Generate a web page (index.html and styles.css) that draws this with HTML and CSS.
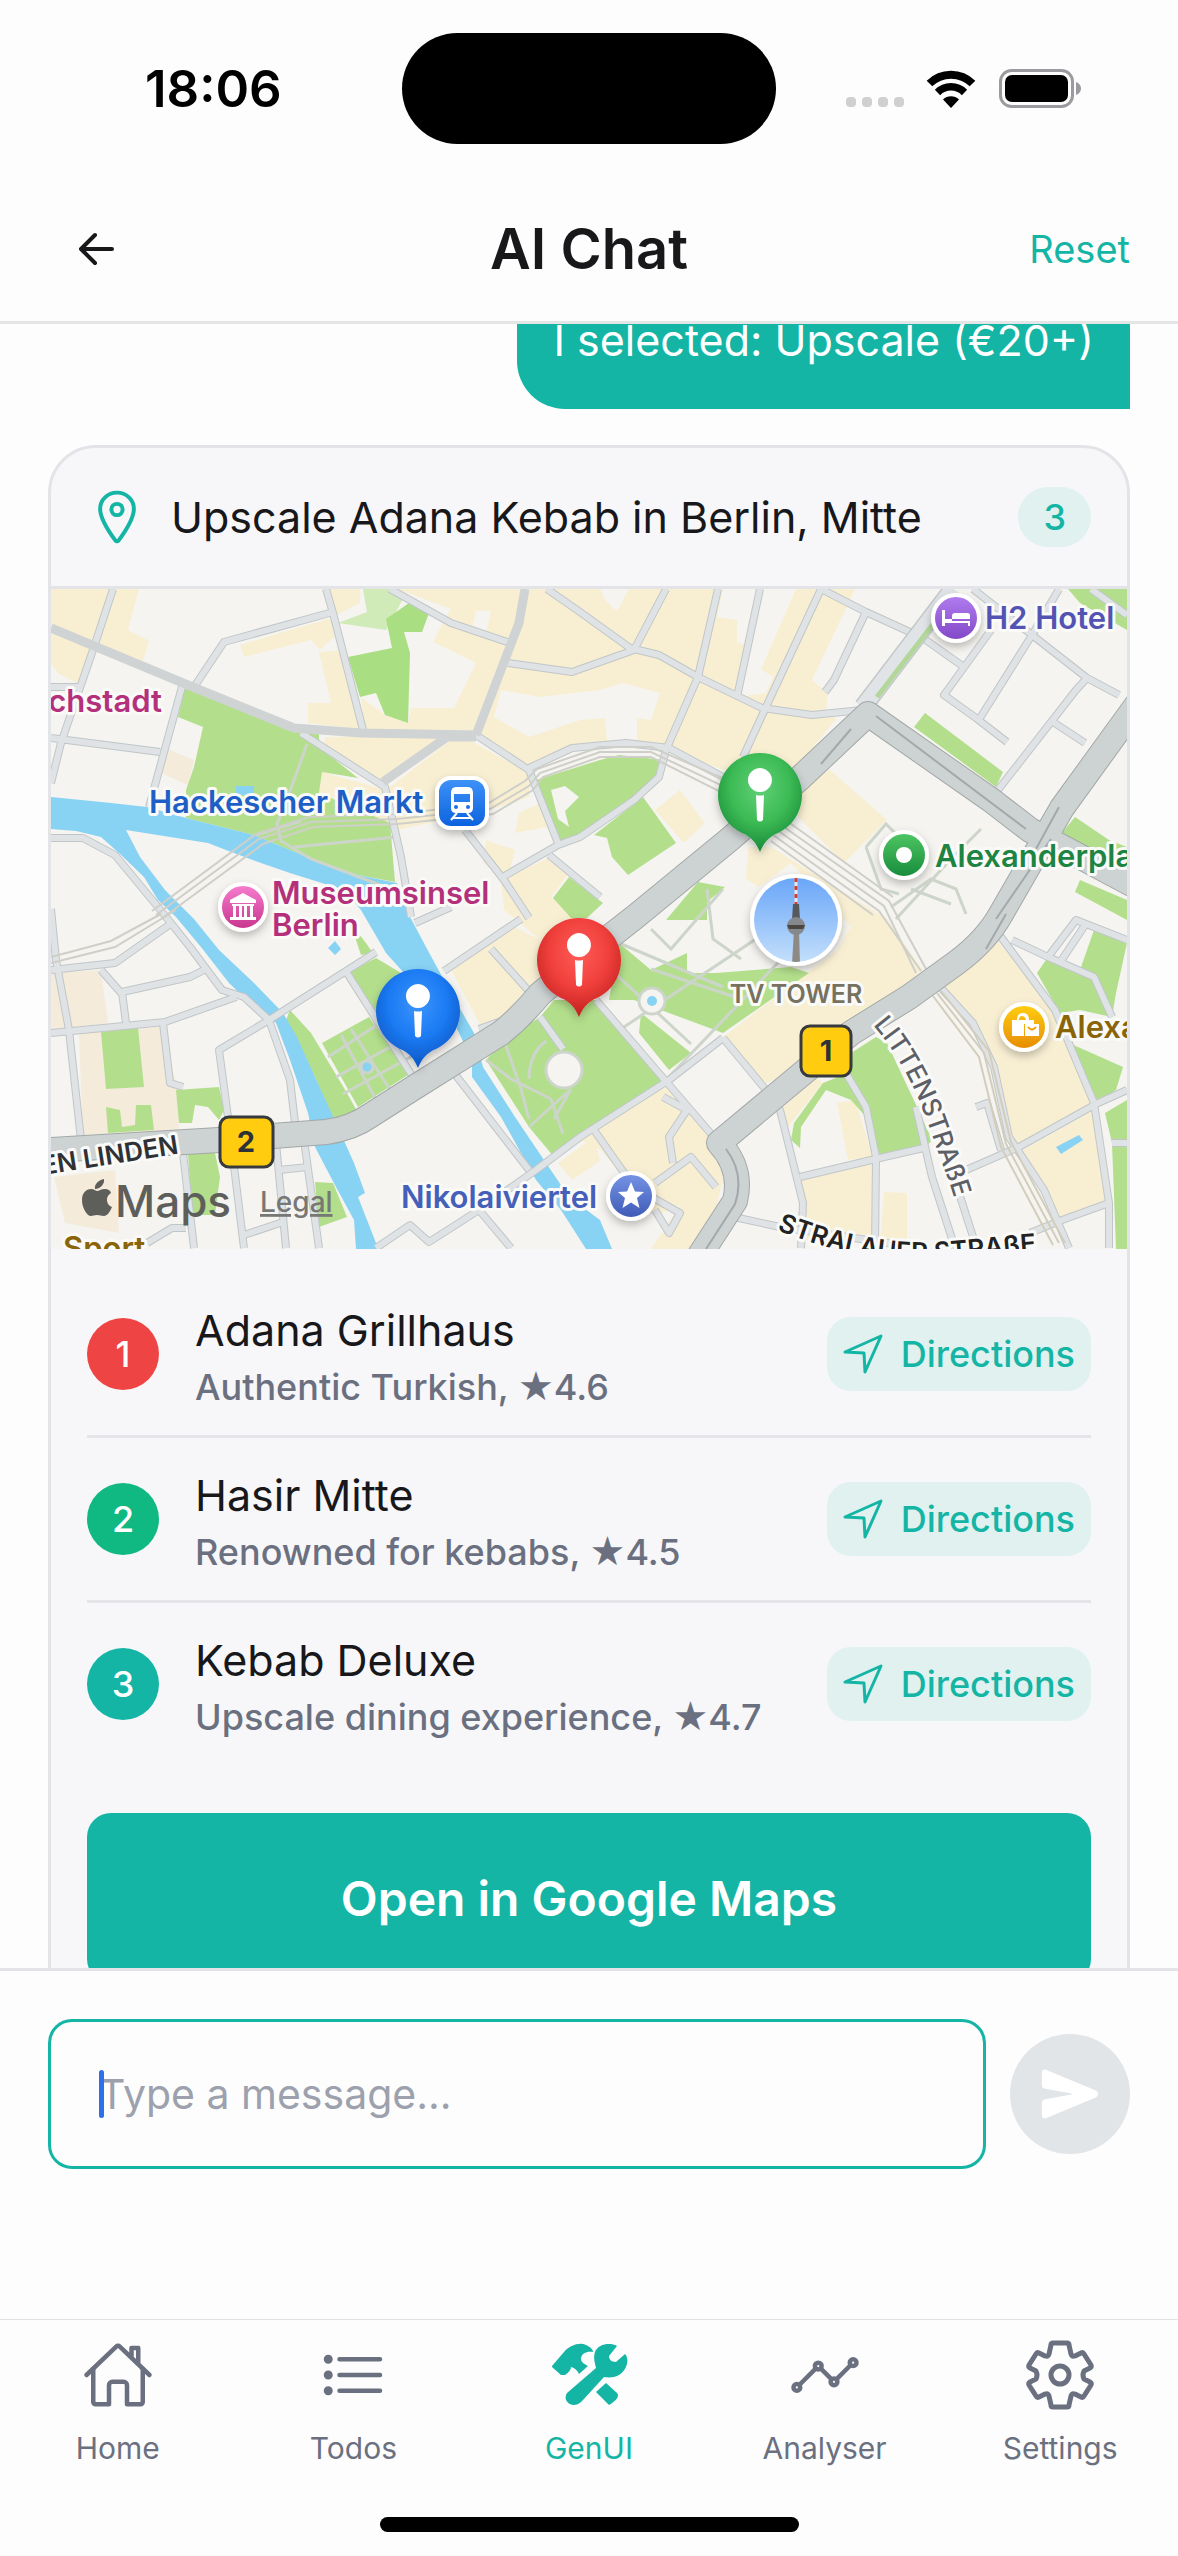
FILE: index.html
```html
<!DOCTYPE html>
<html lang="en">
<head>
    <meta charset="UTF-8">
    <meta name="viewport" content="width=device-width, initial-scale=1.0">
    <title>AI Chat</title>
    <link rel="stylesheet" href="styles.css">
</head>
<body>
    <div class="status-bar">
        <div class="status-side"><span class="time">18:06</span></div>
        <div class="island"></div>
        <div class="status-side status-right">
            <div class="signal"><i></i><i></i><i></i><i></i></div>
            <svg class="wifi" viewBox="0 0 50 38" fill="none" stroke="#000">
                <path d="M3.500 13.500A30.500 30.500 0 0 1 46.500 13.500" stroke-width="8"/>
                <path d="M11.500 22.500A19 19 0 0 1 38.500 22.500" stroke-width="7.500"/>
                <path d="M25 38L17 29.500A11.500 11.500 0 0 1 33 29.500Z" fill="#000" stroke="none"/>
            </svg>
            <svg class="battery" viewBox="0 0 82 40">
                <rect x="1.500" y="1.500" width="72" height="36" rx="11" fill="none" stroke="#9b9b9f" stroke-width="3"/>
                <rect x="6" y="6" width="63" height="27" rx="7"/>
                <path d="M77 13c3 1 5 3.500 5 6.500s-2 5.500-5 6.500z" fill="#9b9b9f"/>
            </svg>
        </div>
    </div>

    <header class="header">
        <button class="back" aria-label="Back">
            <svg viewBox="0 0 38 36" fill="none" stroke="#18181b" stroke-width="4" stroke-linecap="round" stroke-linejoin="round">
                <path d="M34 18H3M17 4L3 18L17 32"/>
            </svg>
        </button>
        <h1>AI Chat</h1>
        <button class="reset">Reset</button>
    </header>

    <main class="chat">
        <div class="messages">
            <p class="bubble">I selected: Upscale (€20+)</p>

            <section class="card">
                <div class="card-header">
                    <svg class="pin-icon" viewBox="0 0 512 512" fill="none" stroke="#14b5a5" stroke-width="34" stroke-linejoin="round">
                        <path d="M256 48c-79.500 0-144 61.390-144 137 0 87 96 224.870 131.250 272.490a15.770 15.770 0 0025.500 0C304 409.890 400 272.070 400 185c0-75.610-64.500-137-144-137z"/>
                        <circle cx="256" cy="192" r="48"/>
                    </svg>
                    <h2>Upscale Adana Kebab in Berlin, Mitte</h2>
                    <span class="count">3</span>
                </div>

                <svg class="map" viewBox="0 0 1076 660" preserveAspectRatio="xMidYMid slice">
                    <defs>
                        <linearGradient id="g-blue" x2="0" y2="1"><stop stop-color="#3f93f8"/><stop offset="1" stop-color="#0b61dd"/></linearGradient>
                        <linearGradient id="g-pink" x2="0" y2="1"><stop stop-color="#f77fd0"/><stop offset="1" stop-color="#c7338c"/></linearGradient>
                        <linearGradient id="g-purple" x2="0" y2="1"><stop stop-color="#b27df0"/><stop offset="1" stop-color="#8047c6"/></linearGradient>
                        <linearGradient id="g-green" x2="0" y2="1"><stop stop-color="#4fc763"/><stop offset="1" stop-color="#168a3c"/></linearGradient>
                        <linearGradient id="g-yellow" x2="0" y2="1"><stop stop-color="#ffcf0d"/><stop offset="1" stop-color="#e68a05"/></linearGradient>
                        <linearGradient id="g-indigo" x2="0" y2="1"><stop stop-color="#7795e6"/><stop offset="1" stop-color="#3d59b5"/></linearGradient>
                        <linearGradient id="g-sky" x2="0" y2="1"><stop stop-color="#6aa6f8"/><stop offset="1" stop-color="#c3dffb"/></linearGradient>
                        <radialGradient id="pin-green" cy=".35" r=".7"><stop stop-color="#62d077"/><stop offset=".5" stop-color="#3cbb55"/><stop offset="1" stop-color="#128034"/></radialGradient>
                        <radialGradient id="pin-red" cy=".35" r=".7"><stop stop-color="#ff5c58"/><stop offset=".5" stop-color="#f0403c"/><stop offset="1" stop-color="#b81a1a"/></radialGradient>
                        <radialGradient id="pin-blue" cy=".35" r=".7"><stop stop-color="#3c94fc"/><stop offset=".5" stop-color="#1b7af3"/><stop offset="1" stop-color="#0a4fb8"/></radialGradient>
                        <filter id="soft" x="-50%" y="-50%" width="200%" height="200%"><feDropShadow dx="0" dy="4" stdDeviation="4" flood-opacity=".25"/></filter>
                        <clipPath id="tower-clip"><circle r="42"/></clipPath>
                        <path id="litten" d="M822 436C850 468 870 510 884 555C894 583 902 600 907 625"/>
                        <path id="stralauer" d="M726 641C770 659 830 674 880 672S970 662 1020 662"/>
                        <path id="pin-shape" d="M0 0C-4-9-8-15-18-19A42 42 0 1 1 18-19C8-15 4-9 0 0Z"/>
                        <path id="pin-mark" d="M0-84a12 12 0 1 1-.1 0ZM-4-57Q0-56 4-57L3-32Q0-29-3-32Z"/>
                        <g id="street-lines">
                            <path d="M62 0L43 58L10 154L0 194M275 0L282 24L312 141M282 23L173 53L143 98M132 94L98 218M0 149L109 163M0 98H28M339 0L400 34L459 54"/>
                            <path d="M457 74L521 83L583 61L615 0M496 0L529 23L579 59L608 66L647 88L711 119L761 126L811 121M425 146L478 181L507 254M478 179L521 159L575 154L618 159L672 188"/>
                            <path d="M250 144L334 198L350 268L360 328M414 241L453 291L478 329M450 289L507 256L529 248L583 211L608 188L615 161L647 88L667 0M498 266L549 308M709 0L686 108M770 0L715 118L692 168"/>
                            <path d="M772 1L815 23L861 44M815 23L783 91L774 103M872 49L913 78M940 41L893 106L925 129L956 153M922 0L981 46L1036 89L1068 106M981 46L929 129M1008 0L981 46M1036 89L1025 101L947 201M1002 133L1034 154M1040 0L1076 26"/>
                            <path d="M0 381L64 374L118 336M0 444L114 433L185 408M0 320L5 371L18 441L30 551M71 403L139 388L153 381M71 403L75 434M50 381L71 405M112 434L119 494L132 498"/>
                            <path d="M0 249H32L64 266L107 318L139 358L171 401L193 408L218 431M325 363L218 431L168 461L177 528L193 659M296 384L364 491M218 431L239 491L244 534M225 554L235 659M253 551L268 659M228 581L257 578M132 564L143 659M193 646L232 633M96 654L121 639H135"/>
                            <path d="M325 659L359 636L378 653L428 621L485 581L529 548L618 491L672 449M428 621L460 659M403 484L478 581M545 411L668 554M489 428L512 460M672 449L715 501L729 521L752 614L750 659M793 481L815 518L825 568L824 659M749 588L833 568L877 558M865 518L881 588L904 659"/>
                            <path d="M915 581L968 558L1047 514L1076 501M925 518L936 514L950 561M890 399L922 434L943 478L958 548L993 601L1018 659M947 344L1004 421L1043 514L1058 614V659M1058 614L1011 631L979 644M961 351L997 368L1025 331L1076 351M997 368L1043 388L1061 428M1010 372L1034 336M683 628L729 638L850 656M908 604L924 654"/>
                            <path d="M543 541L583 598L629 624L618 644L604 621M604 594L640 568L665 598M636 521L618 548L622 574M612 508L636 521M1061 554H1076M364 334L400 318M393 382L470 330M440 360L485 410M428 440L470 425"/>
                        </g>
                        <g id="main-roads">
                            <path d="M0 561L168 551L275 543Q300 540 320 526L364 498L450 444Q470 428 489 405L543 360L584 328L679 250L748 190L817 125L940 211L979 241L1090 300"/>
                            <path d="M1090 110L1011 219L950 325Q935 352 905 374L858 408L800 444L668 554Q692 580 684 612L640 680"/>
                        </g>
                    </defs>

                    <rect width="1076" height="660" fill="#f5f4f0"/>

                    <!-- built-up areas -->
                    <g fill="#f8efd3">
                        <path d="M0 0H88L77 41L98 52L92 72L43 54L28 95L8 85L0 75Z"/>
                        <path d="M189 56L280 29L285 46L269 61L260 51L193 68Z"/>
                        <path d="M268 63L292 61L312 141L257 134V114H280Z"/>
                        <path d="M278 0H309V14L286 26Z"/>
                        <path d="M310 108L334 126L357 134L360 119H403L425 74L382 53L392 34L400 20L346 0H471L459 54L425 144L314 141Z"/>
                        <path d="M478 0H804L793 24L761 91L777 104L775 121L785 130L743 182L672 181L614 158L529 154L478 178L425 148L457 74Z"/>
                        <path d="M275 148L396 146L332 198L271 158Z"/>
                        <path d="M335 201L400 151H418L478 184V208L439 221L346 241L268 204L271 183Z"/>
                        <path d="M468 224L489 214L496 238L464 244Z"/>
                        <path d="M435 251L464 261L460 278L450 288L432 274Z"/>
                        <path d="M450 291L500 268L518 284L500 308L530 334L500 360L453 321Z"/>
                        <path d="M400 381L464 338L489 351L493 394L432 441Z"/>
                        <path d="M750 194L779 181L836 231L793 274L743 224Z"/>
                        <path d="M697 258H720L836 330L872 381L750 481L715 494L672 448L786 361L800 338L740 274L708 298L695 290Z"/>
                        <path d="M629 201L654 234L633 254L604 221Z"/>
                        <path d="M943 348L1011 424L1047 518L965 558L933 454L890 401Z"/>
                        <path d="M972 561L1043 521L1058 614L1008 634Z"/>
                        <path d="M750 588L825 571L822 651H754ZM833 603L856 604V651H829Z"/>
                        <path d="M786 514L804 511L822 568L797 571Z"/>
                        <path d="M729 521L765 488L772 494L735 540Z"/>
                        <path d="M529 551L611 494L658 548L672 588L665 598L604 628L550 561Z"/>
                        <path d="M507 574L543 548L549 572L521 591ZM640 600L672 590L660 640L640 660H600Z"/>
                    </g>
                    <g fill="#f5f4f0">
                        <path d="M450 101L489 108L549 101L572 94L609 104L600 131L586 129V151H556L554 129L529 131L478 148L443 128Z"/>
                        <path d="M672 0H706L700 56L686 54V31L666 28Z"/>
                        <path d="M712 0H745L710 80L722 88L715 104L687 108Z"/>
                        <path d="M800 338L715 300L700 340L760 380Z" fill="#f6f3ea"/>
                        <path d="M549 0H578L566 22L555 12Z"/>
                        <path d="M425 22H440L436 40L420 44Z"/>
                    </g>
                    <g fill="#f4ebdb">
                        <path d="M28 444L110 438L127 501L128 544L32 551Z"/>
                        <path d="M0 384L50 381L57 434L0 441ZM3 588L64 581L68 644L14 634ZM112 158L143 171L137 196L110 184Z"/>
                    </g>

                    <!-- parks -->
                    <g fill="#b3df8c">
                        <path d="M134 98L239 138L268 144V158L307 189L271 183L268 204L339 234L344 293L307 286L246 264L203 246L135 229V201L143 178L152 138L127 128Z"/>
                        <path d="M312 0H337L353 8L335 41L287 34L316 23Z" fill="#d0eab8"/>
                        <path d="M358 14L378 24L371 43H353L359 64L357 134L334 126L325 104L309 108L297 68L341 59L335 30Z" fill="#a9df82"/>
                        <path d="M485 191L549 171L568 166L613 171L608 188L583 208L550 233L510 254Z"/>
                        <path d="M592 208L625 254L577 286L561 268L556 249L543 246Z"/>
                        <path d="M647 293L674 298L656 313V331H615Z"/>
                        <path d="M518 288L552 314L536 329H520L502 309Z"/>
                        <path d="M874 124L952 183L945 198L863 138ZM1024 228L1058 251L1076 258V274L1009 246ZM1029 291L1076 311V331L1024 303ZM1017 0H1076V41L1029 14Z"/>
                        <path d="M50 443L87 439L93 498L55 500ZM55 518L69 521L71 538L84 536L85 516H100L103 541L57 544Z"/>
                        <path d="M125 501L168 498L173 521L168 531L157 518L144 516L141 534H128ZM137 564H164L169 588L164 626H141Z"/>
                        <path d="M264 593L282 594L296 628L268 638Z"/>
                        <path d="M239 421L260 444L296 504L307 524L282 531L264 488L235 431Z"/>
                        <path d="M271 454L318 428L346 468L360 484L307 518Z"/>
                        <path d="M298 383L325 369L350 384L335 428L322 425Z"/>
                        <path d="M300 336L312 350L322 364L310 366Z"/>
                        <path d="M453 451L489 428L503 411H550L615 491L529 544L503 568L478 538L435 471Z"/>
                        <path d="M568 354L600 381L636 364V384L665 384L740 378L758 384L672 444L618 424L583 411H558Z"/>
                        <path d="M590 424L640 464L618 481L588 444Z"/>
                        <path d="M825 448L836 454L866 518L881 551L875 558L829 566L815 528L800 511L775 501L750 538L749 559L740 551L743 534L772 494L797 484L800 464Z"/>
                        <path d="M1043 341L1076 354L1065 404L1061 428L1029 421L1009 424L986 384L997 368L1029 381Z"/>
                        <path d="M1018 454L1072 478L1065 501L1047 513ZM1054 524L1076 511V660H1065L1061 554Z"/>
                    </g>
                    <path d="M500 201L514 197L528 208L514 222L518 238L507 230Z" fill="#f5f4f0"/>

                    <!-- water -->
                    <g fill="#88d2f3">
                        <path d="M0 208L60 214L96 218L135 229L203 246L246 264L307 286L346 294L357 324L375 358L400 404L423 444L432 478L464 528L493 571L518 608L549 631L561 660H535L510 621L485 591L450 528L421 488V474L410 448L393 414L375 398L353 384L335 364L310 321L293 301L239 284L210 274L175 261L157 254L75 241L89 268L114 301L143 330L168 361L203 394L232 424L246 448L264 488L285 534L303 574L314 604L307 608L325 654L330 660H305L303 631L285 598L264 558L257 524L239 471L225 434L203 418L178 394L150 358L125 328L107 311L93 288L68 264L50 248L25 242L0 240Z"/>
                        <path d="M185 197H203V206H185ZM277 359L284 352L290 360L284 366ZM1005 558L1028 546L1032 551L1010 565Z"/>
                    </g>

                    <!-- park paths -->
                    <g fill="none" stroke="#cdd5cb" stroke-width="3">
                        <path d="M256 155L238 205L226 235L230 252L260 270L340 300"/>
                        <path d="M243 258L346 248M205 246L250 232M435 471L460 490L500 510L512 545M478 538L520 500L503 530M489 428L512 455M478 490Q478 465 495 452M453 451L470 500L478 530"/>
                        <path d="M285 488L350 452M277 468L335 430M292 505L365 465M300 440L345 510M290 446L330 520"/>
                        <path d="M555 376L640 455M568 354L672 398M570 440L735 330M600 380L690 410M615 491L740 360M600 340L620 360L672 300M656 300L662 350L690 370"/>
                        <circle cx="601" cy="412" r="13" fill="#f5f4f0"/><circle cx="316" cy="478" r="6" fill="#88d2f3"/>
                        <circle cx="513" cy="481" r="18" fill="#f5f4f0"/>
                        <path d="M840 318L880 290L905 300L915 325M845 330L900 270L930 240M860 300L900 315M815 258L835 235L850 250M815 258L830 300L848 305"/>
                    </g>
                    <circle cx="601" cy="412" r="5" fill="#88d2f3"/>

                    <!-- streets: casing first, surface on top -->
                    <use href="#street-lines" class="road street-casing"/>
                    <use href="#street-lines" class="road street-top"/>
                    <g fill="none" stroke="#cfd3d4" stroke-width="9">
                        <path d="M0 39L132 94L243 139L310 144L425 146M474 0L468 34L425 146M332 193L396 148H425"/>
                        <path d="M902 0L812 118" stroke="#c3c8ca" stroke-width="19"/>
                        <path d="M902 0L812 118" stroke="#e0e4e6" stroke-width="16"/>
                        <path d="M886 30L826 108" stroke="#b3d79a" stroke-width="5"/>
                    </g>

                    <!-- railway -->
                    <g fill="none" stroke="#cfcfc9" stroke-width="2">
                        <path d="M105 326L208 250L260 233L346 230L439 220L478 197L489 184L549 163L600 163L672 197L729 243L833 317L865 384"/>
                        <path d="M110 330L212 255L262 238L346 235L442 225L482 201L492 188L549 168L600 168L670 203L725 248L828 322L870 382"/>
                        <path d="M101 322L205 245L258 228L346 225L436 215L474 192L486 180L549 158L600 158L676 191L733 238L838 312L875 380"/>
                        <path d="M736 232L842 308M720 252L822 326M0 374L64 358L125 321M0 368L60 352L110 325"/>
                        <path d="M886 404L933 464L955 555L1008 654M890 402L938 462L960 553L1014 654M882 407L928 468L950 558L1002 656" stroke="#d3cdbb"/>
                    </g>

                    <!-- main roads -->
                    <use href="#main-roads" class="road main-casing"/>
                    <use href="#main-roads" class="road main-top"/>
                    <path d="M825 127L975 240M800 140L770 175M1008 218L985 260M955 325L935 360M675 560Q694 585 684 615L655 660M1000 250L945 330" fill="none" stroke="#a3a8a8" stroke-width="2"/>

                    <!-- places -->
                    <g class="place">
                        <text x="111" y="123" text-anchor="end" fill="#b4307b">chstadt</text>
                        <text x="98" y="224" fill="#1d5fc6">Hackescher Markt</text>
                        <text x="221" y="315" fill="#b4307b">Museumsinsel</text>
                        <text x="221" y="347" fill="#b4307b">Berlin</text>
                        <text x="934" y="40" fill="#5353b3">H2 Hotel</text>
                        <text x="884" y="278" fill="#1d8443">Alexanderplatz</text>
                        <text x="1004" y="449" fill="#8a6508">Alexa</text>
                        <text x="350" y="619" fill="#4560b8">Nikolaiviertel</text>
                        <text x="12" y="670" fill="#8a6508">Sport</text>
                        <text class="landmark" x="745" y="414" text-anchor="middle" fill="#76725f">TV TOWER</text>
                        <text class="street-name" transform="translate(-8 586) rotate(-9)" fill="#2e3236">EN LINDEN</text>
                        <text class="street-name thin" fill="#5c6066"><textPath href="#litten">LITTENSTRAßE</textPath></text>
                        <text class="street-name" fill="#222"><textPath href="#stralauer">STRALAUER STRAßE</textPath></text>
                    </g>

                    <g stroke="#fff" stroke-width="4" filter="url(#soft)">
                        <rect x="386" y="189" width="50" height="50" rx="14" fill="url(#g-blue)"/>
                        <circle cx="192" cy="318" r="23" fill="url(#g-pink)"/>
                        <circle cx="905" cy="29" r="23" fill="url(#g-purple)"/>
                        <circle cx="853" cy="266" r="23" fill="url(#g-green)"/>
                        <circle cx="973" cy="438" r="23" fill="url(#g-yellow)"/>
                        <circle cx="580" cy="607" r="23" fill="url(#g-indigo)"/>
                    </g>
                    <g fill="#fff">
                        <!-- train -->
                        <path d="M405 198h12q5 0 5 6v15q0 5-5 5h-12q-5 0-5-5v-15q0-6 5-6zM403 205v8h16v-8z" fill-rule="evenodd"/>
                        <path d="M406 224L400 231M416 224L422 231M402 229H420" stroke="#fff" stroke-width="2"/>
                        <circle cx="405" cy="218" r="2" fill="#1b6fe5"/><circle cx="417" cy="218" r="2" fill="#1b6fe5"/>
                        <!-- museum -->
                        <path d="M192 304L205 311V314H179V311ZM181 315H203V317H181ZM182 317h3v11h-3zM188 317h3v11h-3zM193 317h3v11h-3zM199 317h3v11h-3zM179 328H205V331H179Z"/>
                        <!-- bed -->
                        <path d="M891 21h3v9h25v-4q0-2-3-2h-12q-3 0-3 3v5h18v5h-2v-3h-23v3h-3z"/>
                        <circle cx="853" cy="266" r="8"/>
                        <!-- shopping bags -->
                        <path d="M961 431h5q0-7 6-7t6 7h5v4h-10v12h-12zM968 431h7q-1-4-4-4t-3 4zM974 435h14v12h-14z" fill-rule="evenodd"/>
                        <path d="M977 438q4 5 8 0" fill="none" stroke="#f2a008" stroke-width="2"/>
                        <path d="M580 593L584 602.500L593 603L586 609L588.500 619L580 613.500L571.500 619L574 609L567 603L576 602.500Z"/>
                    </g>

                    <g transform="translate(745 331)">
                        <circle r="46" fill="#fff" filter="url(#soft)"/>
                        <circle r="42" fill="url(#g-sky)"/>
                        <g clip-path="url(#tower-clip)">
                            <path d="M0-42V-14" stroke="#e8e8e8" stroke-width="3"/>
                            <path d="M0-42V-14" stroke="#d63a32" stroke-width="3" stroke-dasharray="4 4"/>
                            <path d="M-3-16H3L4 0H-4Z" fill="#55585c"/>
                            <path d="M-2 10H3L4 44H-4Z" fill="#8d8a85"/>
                            <circle cy="6" r="9" fill="#85888c"/>
                            <path d="M-9 5H9L7 9H-7Z" fill="#4a4743"/>
                        </g>
                    </g>

                    <g fill="#ffcc10" stroke="#37393d" stroke-width="3">
                        <rect x="169" y="528" width="53" height="50" rx="9"/>
                        <rect x="750" y="437" width="50" height="50" rx="9"/>
                    </g>
                    <g class="route">
                        <text x="195" y="563">2</text>
                        <text x="775" y="472">1</text>
                    </g>

                    <!-- result pins -->
                    <g filter="url(#soft)">
                        <use href="#pin-shape" x="709" y="263" fill="url(#pin-green)"/>
                        <use href="#pin-shape" x="528" y="428" fill="url(#pin-red)"/>
                        <use href="#pin-shape" x="367" y="479" fill="url(#pin-blue)"/>
                    </g>
                    <g fill="#fff">
                        <use href="#pin-mark" x="709" y="263"/>
                        <use href="#pin-mark" x="528" y="428"/>
                        <use href="#pin-mark" x="367" y="479"/>
                    </g>

                    <g fill="#5e5e5b">
                        <path d="M53 590c1 5-4 10-9 10c-1-5 4-9 9-10zM46 602c2 0 4-2 8-2c3 0 5 1 6 4c-6 3-5 12 1 14c-2 5-5 9-8 9c-3 0-4-1-7-1s-4 1-6 1c-4 0-9-8-9-16c0-7 4-11 9-11c3 0 5 2 6 2z"/>
                        <text class="brand" x="64" y="628">Maps</text>
                        <a href="#legal"><text class="legal" x="209" y="623">Legal</text></a>
                    </g>
                </svg>

                <ul class="places">
                    <li>
                        <span class="rank red">1</span>
                        <div class="info">
                            <h3>Adana Grillhaus</h3>
                            <p>Authentic Turkish, <span class="star">★</span>4.6</p>
                        </div>
                        <button class="directions">
                            <svg viewBox="0 0 40 40"><path d="M2 18L38 2L22 38L21 19Z"/></svg>
                            Directions
                        </button>
                    </li>
                    <li>
                        <span class="rank green">2</span>
                        <div class="info">
                            <h3>Hasir Mitte</h3>
                            <p>Renowned for kebabs, <span class="star">★</span>4.5</p>
                        </div>
                        <button class="directions">
                            <svg viewBox="0 0 40 40"><path d="M2 18L38 2L22 38L21 19Z"/></svg>
                            Directions
                        </button>
                    </li>
                    <li>
                        <span class="rank teal">3</span>
                        <div class="info">
                            <h3>Kebab Deluxe</h3>
                            <p>Upscale dining experience, <span class="star">★</span>4.7</p>
                        </div>
                        <button class="directions">
                            <svg viewBox="0 0 40 40"><path d="M2 18L38 2L22 38L21 19Z"/></svg>
                            Directions
                        </button>
                    </li>
                </ul>
                <button class="open-maps">Open in Google Maps</button>
            </section>
        </div>
    </main>

    <form class="composer">
        <div class="field">
            <span class="caret"></span>
            <input type="text" aria-label="Message" placeholder="Type a message...">
        </div>
        <button type="button" class="send" aria-label="Send">
            <svg viewBox="0 0 512 512" fill="#fff"><path d="M476.590 227.050l-.160-.070L49.350 49.840A23.560 23.560 0 0027.140 52 24.650 24.650 0 0016 72.590v113.290a24 24 0 0019.520 23.570l232.930 43.070a4 4 0 010 7.860L35.530 303.450A24 24 0 0016 327v113.310A23.570 23.570 0 0026.590 460a23.940 23.940 0 0013.220 4 24.550 24.550 0 009.520-1.930L476.400 285.940l.190-.090a32 32 0 000-58.800z"/></svg>
        </button>
    </form>

    <nav class="tabs">
        <a href="#home">
            <svg viewBox="0 0 512 512">
                <path d="M80 212v236a16 16 0 0016 16h96V328a24 24 0 0124-24h80a24 24 0 0124 24v136h96a16 16 0 0016-16V212"/>
                <path d="M480 256L266.890 52c-5-5.280-16.690-5.340-21.780 0L32 256M400 179V64h-48v69"/>
            </svg>
            Home
        </a>
        <a href="#todos">
            <svg viewBox="0 0 512 512">
                <path d="M160 144h288M160 256h288M160 368h288"/>
                <circle cx="80" cy="144" r="16"/><circle cx="80" cy="256" r="16"/><circle cx="80" cy="368" r="16"/>
            </svg>
            Todos
        </a>
        <a href="#genui" class="active">
            <svg class="solid" viewBox="0 0 78 72">
                <path d="M2 27L14 13C20 6 30 3 36 6C40 8 43 10 43 13C37 12 32 14 31 19C30 22 34 25 38 27L29 35C27 31 25 29 21 28C21 31 19 33 15 36L11 36L2 28Z"/>
                <path d="M67 7C60 3 48 5 45 13C43 19 45 24 46 29L17 54C13 60 18 66 24 66C28 66 31 63 33 61L54 38C64 40 74 36 77 25C78 21 77 17 75 15L66 23C61 23 59 20 59 17Z"/>
                <path d="M56 44L67 54C70 57 66 62 59 66L46 53Z"/>
            </svg>
            GenUI
        </a>
        <a href="#analyser">
            <svg viewBox="0 0 512 512">
                <path d="M344 280l88-88M232 216l64 64M80 320l104-104"/>
                <circle cx="456" cy="168" r="24"/><circle cx="320" cy="304" r="24"/><circle cx="208" cy="192" r="24"/><circle cx="56" cy="344" r="24"/>
            </svg>
            Analyser
        </a>
        <a href="#settings">
            <svg class="gear" viewBox="-36 -36 72 72">
                <path d="M-7-32H7Q9-32 9-30L11-21Q12-18 15-19L21-22Q23-23 24-21L31-10Q32-8 30-7L24-4Q22 0 24 4L30 7Q32 8 31 10L24 21Q23 23 21 22L15 19Q12 18 11 21L9 30Q9 32 7 32H-7Q-9 32-9 30L-11 21Q-12 18-15 19L-21 22Q-23 23-24 21L-31 10Q-32 8-30 7L-24 4Q-22 0-24-4L-30-7Q-32-8-31-10L-24-21Q-23-23-21-22L-15-19Q-12-18-11-21L-9-30Q-9-32-7-32Z"/>
                <circle r="9"/>
            </svg>
            Settings
        </a>
        <div class="home-indicator"></div>
    </nav>
</body>
</html>
```
FILE: styles.css
```css
* {
    box-sizing: border-box;
}
body {
    margin: 0;
    height: 100vh;
    display: flex;
    flex-direction: column;
    overflow: hidden;
    background: #fdfdfd;
    color: #18181b;
    font-family: Inter, "Liberation Sans", Arial, sans-serif;
}
h1, h2, h3, p, ul {
    margin: 0;
    padding: 0;
    font-weight: 400;
}
button {
    border: none;
    background: none;
    padding: 0;
    font: inherit;
    color: inherit;
    cursor: pointer;
}
svg {
    display: block;
    flex-shrink: 0;
}

/* Status bar */
.status-bar {
    flex: none;
    height: 177px;
    display: grid;
    grid-template-columns: minmax(0, 1fr) auto minmax(0, 1fr);
    align-items: center;
}
.status-side {
    display: flex;
    align-items: center;
    padding-left: 145px;
    color: #000;
}
.status-right {
    padding: 0 96px 0 0;
    justify-content: flex-end;
    gap: 22px;
}
.time {
    font-size: 51px;
    line-height: 60px;
    font-weight: 600;
}
.island {
    width: 374px;
    height: 111px;
    border-radius: 56px;
    background: #000;
}
.signal {
    display: flex;
    gap: 6px;
    padding-top: 26px;
}
.signal i {
    width: 10px;
    height: 10px;
    border-radius: 4px;
    background: #d0d0d0;
}
.wifi {
    width: 50px;
    height: 38px;
}
.battery {
    width: 84px;
    height: 40px;
}

/* Header */
.header {
    flex: none;
    height: 147px;
    padding: 0 48px;
    border-bottom: 3px solid #e4e5e7;
    display: grid;
    grid-template-columns: 1fr auto 1fr;
    align-items: center;
}
.header h1 {
    font-size: 56px;
    line-height: 72px;
    font-weight: 600;
}
.back {
    justify-self: start;
    padding: 24px 30px;
}
.back svg {
    width: 38px;
    height: 36px;
}
.reset {
    justify-self: end;
    font-size: 38px;
    line-height: 48px;
    color: #14b5a5;
}

/* Chat */
.chat {
    flex: 1;
    min-height: 0;
    padding: 0 48px;
    overflow: hidden;
}
.messages {
    display: flex;
    flex-direction: column;
    gap: 36px;
    margin-top: -53px;
}
.bubble {
    align-self: flex-end;
    padding: 36px;
    border-radius: 48px 48px 0 48px;
    background: #14b5a5;
    color: #fff;
    font-size: 43px;
    line-height: 66px;
}
.card {
    border: 3px solid #e2e4e8;
    border-radius: 48px;
    background: #f7f7fa;
    overflow: hidden;
    padding-bottom: 36px;
}
.card-header {
    display: flex;
    align-items: center;
    gap: 24px;
    height: 141px;
    padding: 0 36px;
    border-bottom: 3px solid #e2e4e8;
}
.pin-icon {
    width: 60px;
    height: 60px;
}
.card-header h2 {
    flex: 1;
    font-size: 43px;
    line-height: 66px;
    white-space: nowrap;
}
.count {
    padding: 6px 25px;
    border-radius: 30px;
    background: #e0f1f0;
    color: #14b5a5;
    font-size: 36px;
    line-height: 48px;
    font-weight: 500;
}

/* Map */
.map {
    width: 100%;
    height: auto;
    overflow: hidden;
}
.road {
    fill: none;
    stroke-linejoin: round;
}
.street-casing {
    stroke: #c0c6c8;
    stroke-width: 8px;
}
.street-top {
    stroke: #dfe3e5;
    stroke-width: 6px;
}
.main-casing {
    stroke: #a3a8a8;
    stroke-width: 26px;
}
.main-top {
    stroke: #cdd2d2;
    stroke-width: 24px;
}
.map text {
    font-family: Inter, "Liberation Sans", Arial, sans-serif;
}
.place text {
    font-size: 31px;
    font-weight: 600;
    stroke: #fafaf8;
    stroke-width: 6px;
    stroke-linejoin: round;
    paint-order: stroke;
}
.place .landmark {
    font-size: 25px;
}
.place .street-name {
    font-size: 26px;
}
.place .thin {
    font-weight: 500;
}
.route text {
    font-size: 29px;
    font-weight: 700;
    fill: #2e3236;
    text-anchor: middle;
}
.brand {
    font-size: 44px;
    font-weight: 500;
}
.legal {
    font-size: 28px;
    font-weight: 500;
    fill: #777775;
    text-decoration: underline;
}

/* Result list */
.places {
    padding: 24px 36px 48px;
    list-style: none;
}
.places li {
    display: flex;
    align-items: center;
    gap: 36px;
    height: 162px;
}
.places li + li {
    height: 165px;
    border-top: 3px solid #e4e5e8;
}
.rank {
    width: 72px;
    height: 72px;
    border-radius: 50%;
    color: #fff;
    font-size: 36px;
    line-height: 72px;
    font-weight: 500;
    text-align: center;
}
.red {
    background: #ef4444;
}
.green {
    background: #10b981;
}
.teal {
    background: #14b5a5;
}
.info {
    flex: 1;
    padding-top: 6px;
}
.info h3 {
    font-size: 43px;
    line-height: 60px;
}
.info p {
    font-size: 36px;
    line-height: 54px;
    font-weight: 500;
    color: #6b7080;
}
.star {
    font-family: "DejaVu Sans", sans-serif;
    font-size: 40px;
    line-height: 1;
}
.directions {
    display: flex;
    align-items: center;
    height: 74px;
    gap: 18px;
    padding: 0 16px;
    border-radius: 24px;
    background: #e0f1f0;
    color: #14b5a5;
    font-size: 36px;
    line-height: 48px;
    font-weight: 500;
}
.directions svg {
    width: 40px;
    height: 40px;
    fill: none;
    stroke: currentColor;
    stroke-width: 3;
    stroke-linejoin: round;
}
.open-maps {
    display: block;
    width: calc(100% - 72px);
    height: 170px;
    margin: 0 36px;
    border-radius: 24px;
    background: #14b5a5;
    color: #fff;
    font-size: 48px;
    font-weight: 600;
}

/* Composer */
.composer {
    flex: none;
    display: flex;
    align-items: center;
    gap: 24px;
    padding: 48px 48px 150px;
    border-top: 3px solid #e2e4e8;
}
.field {
    flex: 1;
    position: relative;
}
.field input {
    display: block;
    width: 100%;
    height: 150px;
    padding: 0 48px;
    border: 3px solid #14b5a5;
    border-radius: 24px;
    outline: none;
    background: #fdfdfd;
    color: #18181b;
    font: inherit;
    font-size: 41px;
}
.field input::placeholder {
    color: #9ca1ad;
    opacity: 1;
}
/* drawn text cursor, sits over the placeholder */
.caret {
    position: absolute;
    left: 51px;
    top: 51px;
    width: 5px;
    height: 48px;
    border-radius: 3px;
    background: #2f6fe8;
}
.send {
    width: 120px;
    height: 120px;
    border-radius: 50%;
    background: #e2e5e8;
    display: flex;
    align-items: center;
    justify-content: center;
}
.send svg {
    width: 60px;
    height: 60px;
}

/* Tab bar */
.tabs {
    flex: none;
    position: relative;
    height: 237px;
    padding-top: 19px;
    border-top: 1px solid #e1e2e4;
    display: flex;
    align-items: flex-start;
}
.tabs a {
    flex: 1;
    display: flex;
    flex-direction: column;
    align-items: center;
    gap: 19px;
    color: #6b7080;
    font-size: 30px;
    line-height: 36px;
    text-decoration: none;
}
.tabs svg {
    width: 72px;
    height: 72px;
    fill: none;
    stroke: currentColor;
    stroke-width: 32;
    stroke-linecap: round;
    stroke-linejoin: round;
}
.tabs .gear {
    stroke-width: 5;
}
.tabs .solid {
    width: 78px;
    fill: currentColor;
    stroke: none;
}
.tabs .active {
    color: #14b5a5;
}
.home-indicator {
    position: absolute;
    left: 50%;
    bottom: 24px;
    width: 419px;
    height: 15px;
    margin-left: -209px;
    border-radius: 8px;
    background: #000;
}
```
